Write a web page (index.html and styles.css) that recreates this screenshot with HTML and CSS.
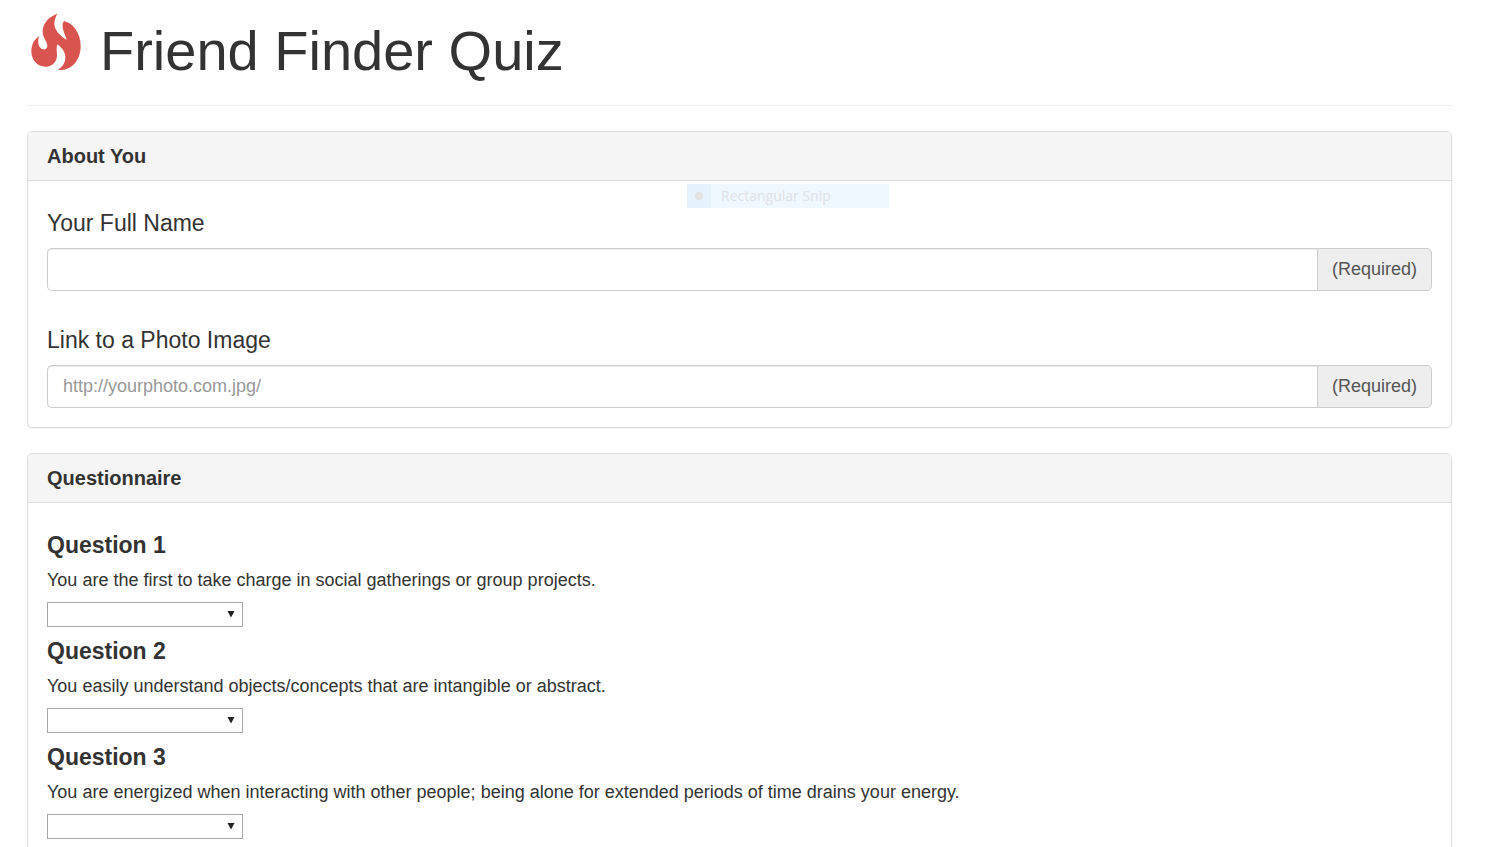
FILE: index.html
```html
<!DOCTYPE html>
<html lang="en">
<head>
<meta charset="utf-8">
<title>Friend Finder Quiz</title>
<link rel="stylesheet" href="styles.css">
</head>
<body>
<main class="page">
  <header class="page-header">
    <svg class="flame" viewBox="33 39 150 172" aria-hidden="true">
      <path d="M112 40C86 49 67 71 68 95C69 114 82 124 82 137C82 144 76 148 70 147C57 144 51 129 57 108C43 117 34 133 34 152C34 180 53 199 77 199C98 199 111 184 111 164C111 152 108 145 112 132C126 142 136 155 136 171C136 187 128 200 113 209C154 213 182 180 182 137C182 99 160 69 132 62C121 80 134 97 140 118C122 108 103 90 103 70C103 58 107 49 112 40Z"/>
    </svg>
    <h1 class="title">Friend Finder Quiz</h1>
  </header>

  <form class="quiz">
    <section class="panel">
      <h2 class="panel-heading">About You</h2>
      <div class="panel-body about">
        <div class="field">
          <label class="field-label" for="name">Your Full Name</label>
          <div class="input-group">
            <input class="text-input" id="name" type="text">
            <span class="addon">(Required)</span>
          </div>
        </div>
        <div class="field">
          <label class="field-label" for="photo">Link to a Photo Image</label>
          <div class="input-group">
            <input class="text-input" id="photo" type="text" placeholder="http://yourphoto.com.jpg/">
            <span class="addon">(Required)</span>
          </div>
        </div>
      </div>
      <div class="snip"><span class="snip-mark"></span><span class="snip-text">Rectangular Snip</span></div>
    </section>

    <section class="panel">
      <h2 class="panel-heading">Questionnaire</h2>
      <div class="panel-body questions">
        <div class="question">
          <h3 class="question-title">Question 1</h3>
          <label class="question-text" for="q1">You are the first to take charge in social gatherings or group projects.</label>
          <div class="select-box">
            <select class="select" id="q1"><option></option><option>1 (Strongly Disagree)</option><option>2</option><option>3</option><option>4</option><option>5 (Strongly Agree)</option></select>
            <svg class="arrow" viewBox="0 0 8 8" aria-hidden="true"><path d="M0.5 1h7L4 7.5z"/></svg>
          </div>
        </div>
        <div class="question">
          <h3 class="question-title">Question 2</h3>
          <label class="question-text" for="q2">You easily understand objects/concepts that are intangible or abstract.</label>
          <div class="select-box">
            <select class="select" id="q2"><option></option><option>1 (Strongly Disagree)</option><option>2</option><option>3</option><option>4</option><option>5 (Strongly Agree)</option></select>
            <svg class="arrow" viewBox="0 0 8 8" aria-hidden="true"><path d="M0.5 1h7L4 7.5z"/></svg>
          </div>
        </div>
        <div class="question">
          <h3 class="question-title">Question 3</h3>
          <label class="question-text" for="q3">You are energized when interacting with other people; being alone for extended periods of time drains your energy.</label>
          <div class="select-box">
            <select class="select" id="q3"><option></option><option>1 (Strongly Disagree)</option><option>2</option><option>3</option><option>4</option><option>5 (Strongly Agree)</option></select>
            <svg class="arrow" viewBox="0 0 8 8" aria-hidden="true"><path d="M0.5 1h7L4 7.5z"/></svg>
          </div>
        </div>
      </div>
    </section>
  </form>
</main>
</body>
</html>
```
FILE: styles.css
```css
* {
  box-sizing: border-box;
}

body {
  margin: 0;
  background: #fff;
  color: #333;
  font-family: "Liberation Sans", Arial, sans-serif;
  font-size: 18px;
  line-height: 26px;
}

.page {
  padding: 0 48px 24px 27px;
}

.page-header {
  display: flex;
  align-items: flex-start;
  gap: 19px;
  padding: 13px 0 23px 4px;
  border-bottom: 1px solid #eee;
}

.flame {
  width: 50px;
  height: 58px;
  fill: #d9534f;
}

.title {
  margin: 7px 0 0;
  font-size: 56px;
  line-height: 62px;
  font-weight: 400;
}

.quiz {
  display: flex;
  flex-direction: column;
  gap: 25px;
  padding-top: 25px;
}

.panel {
  position: relative;
  border: 1px solid #ddd;
  border-radius: 5px;
  box-shadow: 0 1px 1px rgba(0, 0, 0, 0.05);
}

.panel-heading {
  margin: 0;
  padding: 11px 19px;
  border-bottom: 1px solid #ddd;
  border-radius: 4px 4px 0 0;
  background: #f5f5f5;
  font-size: 20px;
  line-height: 26px;
  font-weight: 700;
}

.panel-body {
  display: flex;
  flex-direction: column;
  padding: 29px 19px 19px;
}

.about {
  gap: 36px;
}

.questions {
  gap: 11px;
}

.field {
  display: flex;
  flex-direction: column;
  gap: 12px;
}

.field-label {
  font-size: 23px;
}

.input-group {
  display: flex;
  height: 43px;
}

.text-input {
  flex: 1;
  min-width: 0;
  padding: 0 15px 2px;
  border: 1px solid #ccc;
  border-right: 0;
  border-radius: 5px 0 0 5px;
  background: #fff;
  box-shadow: inset 0 1px 1px rgba(0, 0, 0, 0.075);
  color: #555;
  font: inherit;
}

.text-input::placeholder {
  color: #999;
  opacity: 1;
}

.addon {
  display: flex;
  align-items: center;
  padding: 0 14px 2px;
  border: 1px solid #ccc;
  border-radius: 0 5px 5px 0;
  background: #eee;
  color: #555;
}

.question {
  display: flex;
  flex-direction: column;
  align-items: flex-start;
  gap: 9px;
}

.question-title {
  margin: 0;
  font-size: 23px;
  line-height: 26px;
  font-weight: 700;
}

.select-box {
  position: relative;
  width: 196px;
  height: 25px;
}

.select {
  display: block;
  width: 100%;
  height: 100%;
  padding: 0 20px 0 4px;
  appearance: none;
  border: 1px solid #a9a9a9;
  border-radius: 0;
  background: #fff;
  color: #333;
  font: inherit;
  line-height: 20px;
}

.arrow {
  position: absolute;
  top: 8px;
  right: 8px;
  width: 8px;
  height: 8px;
  fill: #222;
  pointer-events: none;
}

.snip {
  position: absolute;
  top: 52px;
  left: 659px;
  display: flex;
  align-items: center;
  width: 202px;
  height: 24px;
  background: #f0f8ff;
  color: #dfe1e4;
  font-family: "Open Sans", "Noto Sans", sans-serif;
  font-size: 14px;
}

.snip-mark {
  display: flex;
  align-items: center;
  justify-content: center;
  width: 24px;
  height: 24px;
  background: #e6f3fe;
}

.snip-mark::before {
  content: "";
  width: 8px;
  height: 8px;
  border-radius: 50%;
  background: #e2e2e2;
}

.snip-text {
  padding-left: 10px;
}
```
